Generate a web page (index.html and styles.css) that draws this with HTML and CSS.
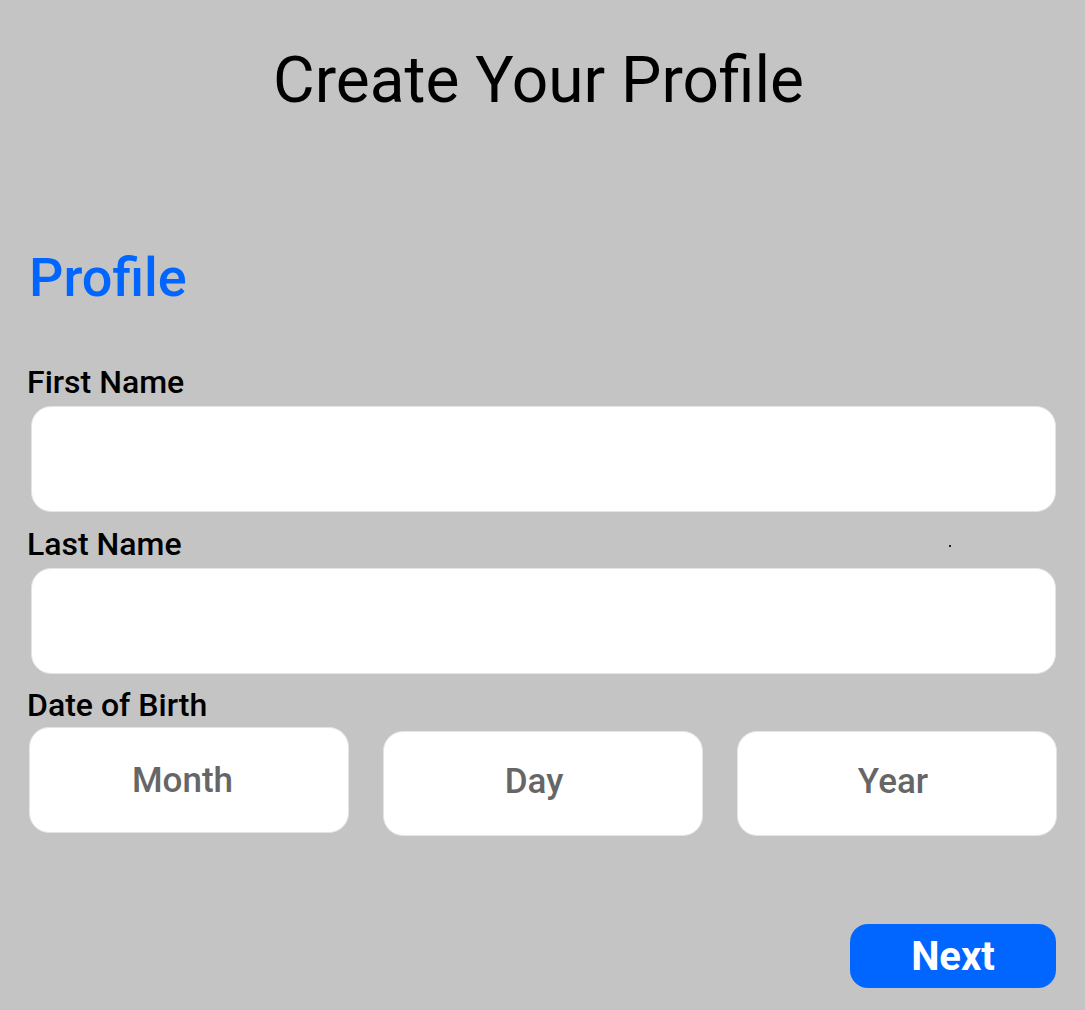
FILE: index.html
```html
<!DOCTYPE html>
<html lang="en">
<head>
<meta charset="utf-8">
<title>Create Your Profile</title>
<link rel="stylesheet" href="styles.css">
</head>
<body>
<main class="page">
  <h1 class="page-title">Create Your Profile</h1>
  <h2 class="section-title">Profile</h2>
  <form class="form">
    <label class="field-label">First Name</label>
    <div class="text-input"></div>
    <label class="field-label field-label--spaced">Last Name</label>
    <div class="text-input"></div>
    <label class="field-label field-label--dob">Date of Birth</label>
    <div class="dob-row">
      <div class="dob-box dob-box--month">Month</div>
      <div class="dob-box dob-box--low dob-box--day">Day</div>
      <div class="dob-box dob-box--low dob-box--year">Year</div>
    </div>
    <div class="actions">
      <button type="button" class="next-btn">Next</button>
    </div>
  </form>
  <span class="speck"></span>
</main>
</body>
</html>
```
FILE: styles.css
```css
html, body {
  margin: 0;
  padding: 0;
  background: #c4c4c4;
}
body {
  font-family: Roboto, "Noto Sans", Arial, sans-serif;
  color: #000;
  width: 1085px;
  height: 1010px;
  overflow: hidden;
}
.page {
  position: relative;
  padding-top: 49px;
}
.page-title {
  margin: 0;
  font-size: 64px;
  line-height: 64px;
  font-weight: 400;
  text-align: center;
  padding-right: 8px;
}
.section-title {
  margin: 138px 0 0 29px;
  font-size: 54px;
  line-height: 54px;
  font-weight: 500;
  color: #0066ff;
}
.form {
  margin-top: 61px;
  padding: 0 29px 0 27px;
}
.field-label {
  display: block;
  font-size: 32px;
  line-height: 32px;
  font-weight: 500;
  color: #000;
}
.field-label--spaced {
  margin-top: 16px;
}
.field-label--dob {
  margin-top: 15px;
}
.text-input {
  margin: 8px 0 0 4px;
  background: #fff;
  border: 1px solid #e4e4e4;
  border-radius: 20px;
  box-sizing: border-box;
  height: 106px;
}
.dob-row {
  display: grid;
  grid-template-columns: 320px 320px 320px;
  column-gap: 34px;
  margin: 6px 0 0 2px;
  align-items: start;
}
.dob-box {
  height: 106px;
  background: #fff;
  border: 1px solid #e4e4e4;
  border-radius: 20px;
  box-sizing: border-box;
  display: flex;
  align-items: center;
  justify-content: center;
  font-size: 35px;
  font-weight: 500;
  color: #666;
}
.dob-box--low {
  margin-top: 4px;
  height: 105px;
  padding-bottom: 5px;
}
.dob-box--month {
  padding-right: 13px;
}
.dob-box--day {
  padding-right: 18px;
}
.dob-box--year {
  padding-right: 8px;
}
.actions {
  display: flex;
  justify-content: flex-end;
  margin-top: 88px;
}
.next-btn {
  width: 206px;
  height: 64px;
  border: none;
  border-radius: 18px;
  background: #0066ff;
  color: #fff;
  font-family: Roboto, "Noto Sans", Arial, sans-serif;
  font-size: 40px;
  font-weight: 700;
  padding: 0;
  cursor: pointer;
}
.speck {
  position: absolute;
  left: 949px;
  top: 545px;
  width: 2px;
  height: 2px;
  background: #222;
}
```
